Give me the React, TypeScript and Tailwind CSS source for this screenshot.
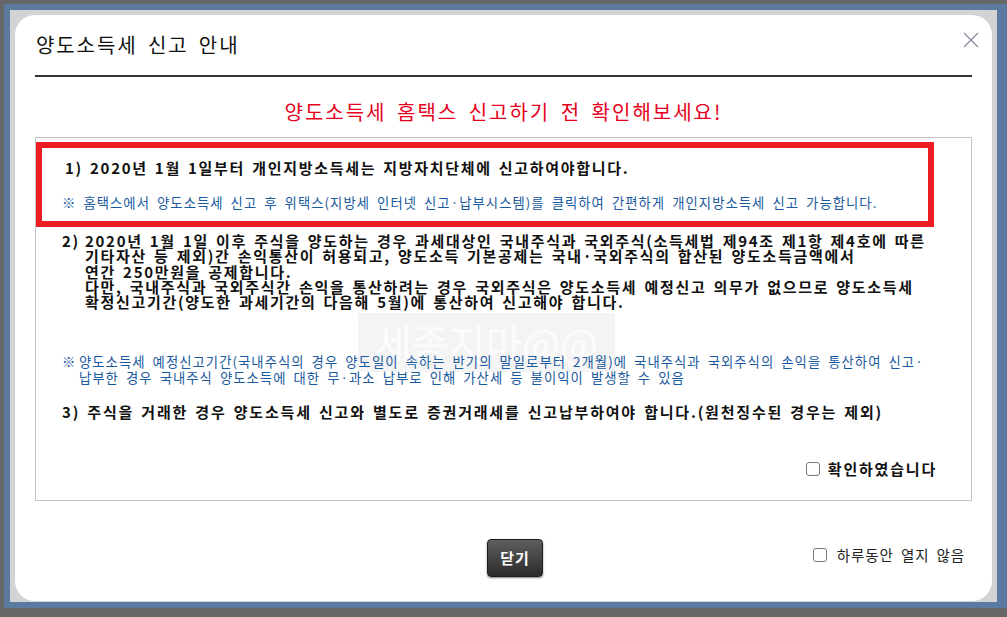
import React from "react";

function Box() {
  return <span className="inline-block w-[14px] h-[14px] border border-[#7a7a7a] rounded-[3px] bg-white shrink-0" />;
}

export default function App() {
  return (
    <div className="w-[1007px] h-[617px] bg-[#676767] pt-[4px] pl-[4px] pb-[9px] flex flex-col overflow-hidden font-['Noto_Sans_CJK_KR',sans-serif]">
      <div className="flex-1 bg-[#5b7aa0] pt-[6px] pl-[6px] pr-[10px] pb-[6px] flex flex-col">
        <div className="flex-1 bg-[#d3d3d3] pt-[5px] px-[5px] pb-[1px] flex flex-col">
          <div className="flex-1 bg-white rounded-[20px] relative px-[20px] flex flex-col">
            <svg className="absolute top-[17px] right-[13px]" width="16" height="16" viewBox="0 0 16 16">
              <path d="M1 1 L15 15 M15 1 L1 15" stroke="#8a8aa0" strokeWidth="1.3" fill="none" />
            </svg>
            <div className="h-[60px] flex items-center pl-[1px] text-[20px] text-[#111] tracking-[1.9px] [word-spacing:4px]">양도소득세 신고 안내</div>
            <div className="h-[2px] bg-[#333]" />
            <div className="h-[60px] pt-[10px] flex items-center justify-center text-[20px] text-[#e60020] tracking-[2px] [word-spacing:4px]">
              양도소득세 홈택스 신고하기 전 확인해보세요!
            </div>
            <div className="relative h-[364px] border border-[#c4c4c4]">
              <div className="absolute left-[322px] top-[175px] w-[257px] h-[59px] bg-[#f4f4f4] text-[#fcfcfc] text-[40px] leading-[59px] text-center overflow-hidden">세종지마@@</div>
              <div className="relative mt-[4px] w-[898px] h-[85px] border-[6px] border-[#ee1c25] pl-[20px] pt-[10px]">
                <div className="ml-[3px] leading-[20px] text-[15px] font-bold text-[#111] tracking-[1.7px] [word-spacing:2px] whitespace-nowrap">
                  1) 2020년 1월 1일부터 개인지방소득세는 지방자치단체에 신고하여야합니다.
                </div>
                <div className="mt-[15px] leading-[20px] text-[13.33px] text-[#1a5a9e] tracking-[1.05px] [word-spacing:3px] whitespace-nowrap">
                  ※ 홈택스에서 양도소득세 신고 후 위택스(지방세 인터넷 신고·납부시스템)를 클릭하여 간편하게 개인지방소득세 신고 가능합니다.
                </div>
              </div>
              <div className="relative mt-[6px] pl-[26px] flex text-[15px] font-bold text-[#111] tracking-[1.7px] [word-spacing:2px] leading-[15.3px] whitespace-nowrap">
                <span className="w-[23px] shrink-0">2)</span>
                <div>
                  2020년 1월 1일 이후 주식을 양도하는 경우 과세대상인 국내주식과 국외주식(소득세법 제94조 제1항 제4호에 따른
                  <br />
                  기타자산 등 제외)간 손익통산이 허용되고, 양도소득 기본공제는 국내·국외주식의 합산된 양도소득금액에서
                  <br />
                  연간 250만원을 공제합니다.
                  <br />
                  다만, 국내주식과 국외주식간 손익을 통산하려는 경우 국외주식은 양도소득세 예정신고 의무가 없으므로 양도소득세
                  <br />
                  확정신고기간(양도한 과세기간의 다음해 5월)에 통산하여 신고해야 합니다.
                </div>
              </div>
              <div className="relative mt-[45px] pl-[26px] flex text-[13.33px] text-[#1a5a9e] tracking-[1.05px] [word-spacing:3px] leading-[16px] whitespace-nowrap">
                <span className="w-[17px] shrink-0">※</span>
                <div>
                  양도소득세 예정신고기간(국내주식의 경우 양도일이 속하는 반기의 말일로부터 2개월)에 국내주식과 국외주식의 손익을 통산하여 신고·
                  <br />
                  납부한 경우 국내주식 양도소득에 대한 무·과소 납부로 인해 가산세 등 불이익이 발생할 수 있음
                </div>
              </div>
              <div className="relative mt-[18px] pl-[26px] text-[15px] font-bold text-[#111] tracking-[1.8px] [word-spacing:2px] leading-[16px] whitespace-nowrap">
                3) 주식을 거래한 경우 양도소득세 신고와 별도로 증권거래세를 신고납부하여야 합니다.(원천징수된 경우는 제외)
              </div>
              <div className="relative mt-[41px] pr-[34px] flex justify-end items-center gap-[8px] leading-[16px]">
                <Box />
                <span className="text-[15px] font-bold text-[#111] tracking-[1.8px] whitespace-nowrap">확인하였습니다</span>
              </div>
            </div>
            <div className="flex items-start pl-[452px] pr-[7px] mt-[38px]">
              <button className="w-[56px] h-[38px] rounded-[4px] bg-gradient-to-b from-[#5e5e5e] to-[#2c2c2c] border border-[#1e1e1e] shadow-[0_1px_2px_rgba(0,0,0,0.5)] text-white font-bold text-[15px] tracking-[1px] flex items-center justify-center">
                닫기
              </button>
              <div className="ml-auto mt-[8px] flex items-center gap-[10px] leading-[16px]">
                <Box />
                <span className="text-[14.5px] text-[#222] tracking-[0.9px] [word-spacing:3px] whitespace-nowrap">하루동안 열지 않음</span>
              </div>
            </div>
          </div>
        </div>
      </div>
    </div>
  );
}
